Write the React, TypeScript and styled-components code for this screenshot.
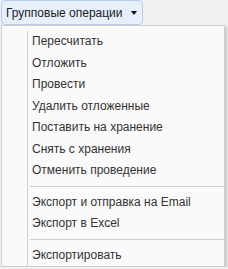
import React from "react";
import styled, { createGlobalStyle } from "styled-components";

const Global = createGlobalStyle`
  html, body { margin: 0; padding: 0; }
  body {
    background: #f0f0f0;
    font-family: "Liberation Sans", Arial, sans-serif;
    font-size: 12px;
    color: #333;
  }
`;

const Wrap = styled.div`
  display: flex;
  flex-direction: column;
  align-items: flex-start;
  padding-left: 1px;
`;

const Trigger = styled.button`
  display: flex;
  align-items: center;
  justify-content: flex-start;
  gap: 6px;
  box-sizing: border-box;
  height: 25px;
  width: 142px;
  padding: 0 5px 0 4px;
  margin: 0;
  background: #e7effd;
  border: 1px solid #b3cbf3;
  border-radius: 4px;
  font-family: inherit;
  font-size: 12px;
  color: #222;
  white-space: nowrap;
  cursor: pointer;
`;

const TriggerText = styled.span`
  white-space: nowrap;
`;

const Caret = styled.span`
  flex: none;
  width: 0;
  height: 0;
  margin-left: auto;
  border-left: 3.5px solid transparent;
  border-right: 3.5px solid transparent;
  border-top: 4px solid #111;
`;

const Menu = styled.div`
  box-sizing: border-box;
  width: 224px;
  background: #fafafa;
  border: 1px solid #cfcfcf;
  box-shadow: 2px 2px 2px rgba(0, 0, 0, 0.16);
  padding-top: 5px;
  display: flex;
  flex-direction: column;
`;

const Row = styled.div`
  display: flex;
  align-items: stretch;
  height: 21.5px;
`;

const IconCell = styled.div`
  width: 25px;
  flex: none;
  border-right: 1px solid #cfcfcf;
`;

const Label = styled.span`
  padding-left: 4px;
  line-height: 21.5px;
  white-space: nowrap;
  color: #333;
`;

const SepRow = styled.div`
  display: flex;
  align-items: stretch;
  height: 10px;
`;

const SepLine = styled.div`
  flex: 1;
  margin: 4.5px 0 0 2px;
  height: 1px;
  background: #cfcfcf;
`;

type Entry = { label: string } | { sep: true };

const entries: Entry[] = [
  { label: "Пересчитать" },
  { label: "Отложить" },
  { label: "Провести" },
  { label: "Удалить отложенные" },
  { label: "Поставить на хранение" },
  { label: "Снять с хранения" },
  { label: "Отменить проведение" },
  { sep: true },
  { label: "Экспорт и отправка на Email" },
  { label: "Экспорт в Excel" },
  { sep: true },
  { label: "Экспортировать" },
];

export default function App() {
  return (
    <>
      <Global />
      <Wrap>
        <Trigger>
          <TriggerText>Групповые операции</TriggerText>
          <Caret />
        </Trigger>
        <Menu>
          {entries.map((e, i) =>
            "sep" in e ? (
              <SepRow key={i}>
                <IconCell />
                <SepLine />
              </SepRow>
            ) : (
              <Row key={i}>
                <IconCell />
                <Label>{e.label}</Label>
              </Row>
            )
          )}
        </Menu>
      </Wrap>
    </>
  );
}
